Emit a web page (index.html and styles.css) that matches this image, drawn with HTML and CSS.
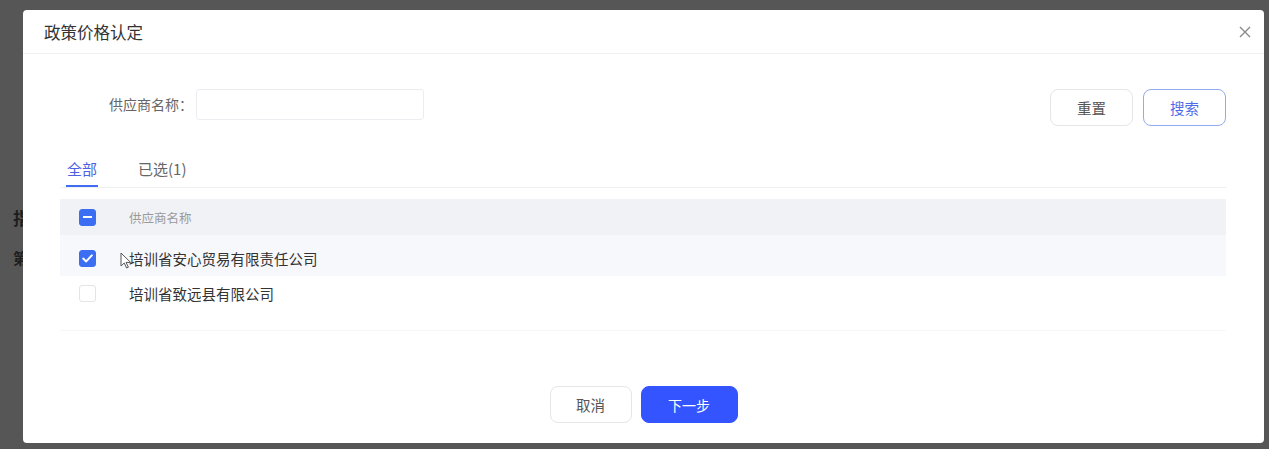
FILE: index.html
```html
<!DOCTYPE html>
<html lang="zh-CN">
<head>
    <meta charset="UTF-8">
    <title>政策价格认定</title>
    <link rel="stylesheet" href="styles.css">
</head>
<body>
    <div class="page-behind">
        <div class="behind-title">指</div>
        <div class="behind-line">第</div>
    </div>
    <div class="mask"></div>

    <div class="dialog">
        <div class="dialog-header">
            <span class="dialog-title">政策价格认定</span>
            <span class="dialog-close">
                <svg width="12" height="12" viewBox="0 0 12 12"><path d="M1 1L11 11M11 1L1 11" stroke="#8a8a8a" stroke-width="1.4" fill="none"/></svg>
            </span>
        </div>

        <div class="dialog-body">
            <div class="search-row">
                <label class="search-label" for="supplier">供应商名称：</label>
                <input type="text" id="supplier" class="search-input">
                <div class="search-actions">
                    <button class="btn">重置</button>
                    <button class="btn btn-outline">搜索</button>
                </div>
            </div>

            <div class="tabs">
                <div class="tab active">全部</div>
                <div class="tab">已选(1)</div>
            </div>

            <div class="table">
                <div class="tr thead">
                    <div class="td col-check"><span class="checkbox indeterminate"></span></div>
                    <div class="td">供应商名称</div>
                </div>
                <div class="tr selected">
                    <div class="td col-check">
                        <span class="checkbox checked">
                            <svg width="11" height="9" viewBox="0 0 11 9"><path d="M1.2 4.6L4.2 7.4L9.8 1.4" stroke="#fff" stroke-width="2" fill="none" stroke-linecap="round" stroke-linejoin="round"/></svg>
                        </span>
                    </div>
                    <div class="td name">培训省安心贸易有限责任公司</div>
                    <svg class="cursor" width="12" height="17" viewBox="0 0 12 17"><path d="M1 1L1 14L4.2 11L6.6 16L8.4 15.2L6 10.4L10.6 10.4Z" fill="#fff" stroke="#555" stroke-width="1"/></svg>
                </div>
                <div class="tr">
                    <div class="td col-check"><span class="checkbox"></span></div>
                    <div class="td name">培训省致远县有限公司</div>
                </div>
                <div class="table-rest"></div>
            </div>
        </div>

        <div class="dialog-footer">
            <button class="btn btn-footer">取消</button>
            <button class="btn btn-footer btn-primary">下一步</button>
        </div>
    </div>
</body>
</html>
```

FILE: styles.css
```css
body {
    margin: 0;
    height: 449px;
    overflow: hidden;
    background: #fff;
    font-family: "Noto Sans CJK SC", "Noto Sans", sans-serif;
    color: #333;
    position: relative;
}
.page-behind {
    padding: 205px 0 0 13px;
    font-size: 17px;
    font-weight: bold;
    color: #222;
}
.behind-line {
    margin-top: 17px;
    font-size: 15px;
}
.mask {
    position: absolute;
    inset: 0;
    background: rgba(30, 30, 30, 0.75);
}
.dialog {
    position: absolute;
    left: 23px;
    top: 10px;
    width: 1241px;
    height: 433px;
    background: #fff;
    border-radius: 4px;
    display: flex;
    flex-direction: column;
}
.dialog-header {
    height: 43px;
    border-bottom: 1px solid #eef0f3;
    display: flex;
    align-items: center;
    justify-content: space-between;
    padding: 0 13px 0 21px;
}
.dialog-title {
    font-size: 16.5px;
    color: #333;
}
.dialog-close {
    display: flex;
    cursor: pointer;
}
.dialog-body {
    flex: 1;
    padding: 35px 38px 0 37px;
}
.search-row {
    display: flex;
    align-items: flex-start;
}
.search-label {
    width: 136px;
    box-sizing: border-box;
    padding-right: 3px;
    text-align: right;
    font-size: 14px;
    color: #666;
    line-height: 31px;
}
.search-input {
    width: 228px;
    height: 31px;
    box-sizing: border-box;
    border: 1px solid #ebedf0;
    border-radius: 3px;
    outline: none;
}
.search-actions {
    margin-left: auto;
    display: flex;
    gap: 10px;
}
.btn {
    font-family: inherit;
    font-size: 14.5px;
    background: #fff;
    color: #555;
    border: 1px solid #e4e6ea;
    border-radius: 8px;
    width: 83px;
    height: 37px;
    cursor: pointer;
}
.btn-outline {
    color: #4f6ce6;
    border-color: #94aaee;
}
.tabs {
    display: flex;
    gap: 39px;
    margin-top: 26px;
    border-bottom: 1px solid #eef0f3;
    padding-left: 6px;
}
.tab {
    font-size: 15px;
    color: #666;
    height: 35px;
    line-height: 33px;
    box-sizing: border-box;
    padding: 0 1px;
}
.tab.active {
    color: #4c62e0;
    border-bottom: 2px solid #3f6ef0;
}
.table {
    margin-top: 11px;
}
.tr {
    display: flex;
    align-items: center;
    height: 35px;
    position: relative;
}
.thead {
    height: 36px;
    background: #f0f2f6;
}
.tr.selected {
    background: #f7f8fc;
    height: 41px;
    box-sizing: border-box;
    padding-top: 5px;
}
.tr .td {
    font-size: 14.5px;
    color: #333;
}
.thead .td {
    font-size: 12.5px;
    color: #9a9a9a;
}
.col-check {
    width: 69px;
    padding-left: 19px;
    box-sizing: border-box;
    display: flex;
}
.checkbox {
    width: 17px;
    height: 17px;
    box-sizing: border-box;
    border: 1px solid #e2e4e8;
    border-radius: 3px;
    background: #fff;
    display: flex;
    align-items: center;
    justify-content: center;
}
.checkbox.checked,
.checkbox.indeterminate {
    background: #3b6ef3;
    border-color: #3b6ef3;
}
.checkbox.indeterminate::after {
    content: "";
    width: 9px;
    height: 2px;
    background: #fff;
}
.cursor {
    position: absolute;
    left: 60px;
    top: 17px;
}
.table-rest {
    height: 19px;
    border-bottom: 1px solid #f6f7f9;
}
.dialog-footer {
    display: flex;
    justify-content: center;
    gap: 9px;
    padding-bottom: 20px;
}
.btn-footer {
    width: 82px;
}
.btn-primary {
    width: 97px;
    font-size: 14px;
    background: #3354ff;
    border-color: #3354ff;
    color: #fff;
}
```
